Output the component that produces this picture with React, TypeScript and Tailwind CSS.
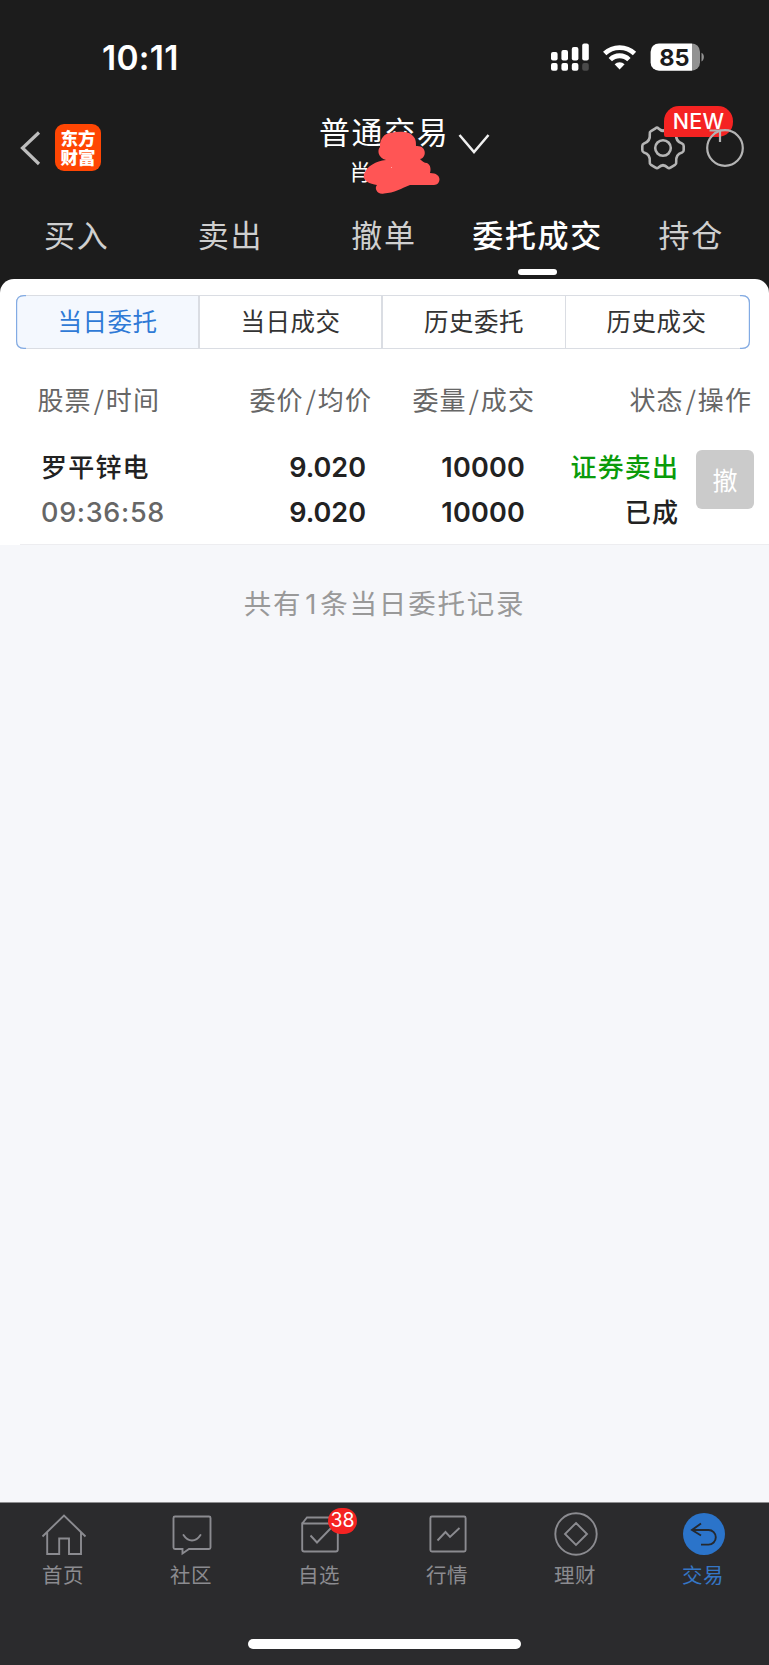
import React from "react";

const cjk = "font-['Noto_Sans_CJK_SC',sans-serif]";
const num = "font-['Inter','Noto_Sans_CJK_SC',sans-serif]";

function StatusBar() {
  return (
    <div className="flex h-[115px] shrink-0 items-start pl-[102px] pr-[65px]">
      <div className={`${num} mt-[38px] text-[33.5px] leading-[40px] font-semibold tracking-[0.3px] text-white`}>10:11</div>
      <svg className="mt-[43px] ml-auto" width="154" height="28" viewBox="550 43 154 28">
        <g fill="#fff">
          <rect x="551" y="52" width="6.6" height="8.4" rx="2" />
          <rect x="561.4" y="50" width="6.6" height="10.4" rx="2" />
          <rect x="571.8" y="47" width="6.6" height="13.4" rx="2" />
          <rect x="582.2" y="43.6" width="6.6" height="16.8" rx="2" />
          <rect x="551" y="63" width="6.6" height="7.8" rx="2" />
          <rect x="561.4" y="63" width="6.6" height="7.8" rx="2" />
          <rect x="571.8" y="63" width="6.6" height="7.8" rx="2" />
          <rect x="582.2" y="63" width="6.6" height="7.8" rx="2" fill="#4a4a4a" />
        </g>
        <g fill="none" stroke="#fff" strokeWidth="4.8">
          <path d="M604.7 53.6a21.6 21.6 0 0 1 29.8 0" />
          <path d="M610.3 59.6a13.2 13.2 0 0 1 18.6 0" />
        </g>
        <path d="M619.6 69.4l-5-5.2a7.4 7.4 0 0 1 10 0z" fill="#fff" />
        <clipPath id="battery">
          <rect x="650.6" y="43.4" width="49.4" height="27.4" rx="8.4" />
        </clipPath>
        <g clipPath="url(#battery)">
          <rect x="650" y="43" width="42" height="28" fill="#fff" />
          <rect x="692" y="43" width="8" height="28" fill="#929292" />
        </g>
        <path d="M701.5 52.8c3.2 1.2 3.2 7.2 0 8.6z" fill="#929292" />
        <text x="674.500" y="65.500" textAnchor="middle" fontFamily="Inter" fontWeight="700" fontSize="23.500" fill="#1c1c1c">85</text>
      </svg>
    </div>
  );
}

function Header() {
  return (
    <div className="relative flex h-[85px] shrink-0 items-start">
      <svg className="mt-[15px] ml-[20px]" width="22" height="36" viewBox="20 130 22 36">
        <path d="M39 132.500L22.500 148l16.500 16" fill="none" stroke="#bdbdbd" strokeWidth="3.200" />
      </svg>
      <div className="mt-[9px] ml-[13px] flex h-[47px] w-[46px] flex-col items-center justify-center rounded-[9px] bg-[#ff4603] font-['Noto_Sans_CJK_SC',sans-serif] text-[17.500px] leading-[19px] font-black text-white">
        <span>东方</span>
        <span className="mb-[2px]">财富</span>
      </div>
      <div className="mt-[-6px] ml-[218px] flex w-[130px] flex-col">
        <span className={`${cjk} text-[31px] leading-[43px] tracking-[1.600px] whitespace-nowrap text-white`}>普通交易</span>
        <span className={`${cjk} mt-[2px] ml-[30px] h-[32px] text-[22px] leading-[32px] text-white`}>肖</span>
      </div>
      <svg className="mt-[17px] ml-[8px]" width="34" height="24" viewBox="457 132 34 24">
        <path d="M459.500 135L474 152l14.500-17" fill="none" stroke="#f0f0f0" strokeWidth="2.500" />
      </svg>
      <svg className="mt-[10px] ml-[149px]" width="46" height="46" viewBox="-23 -23 46 46">
        <path
          d="M-7.500-19.600Q-6-21-4.500-19.500Q0-15 4.500-19.500Q6-21 7.500-19.600L12-17Q13.600-16 13.200-14Q12.500-6.500 19-4.600Q20.700-4 20.700-2V2Q20.700 4 19 4.600Q12.500 6.500 13.200 14Q13.600 16 12 17L7.500 19.600Q6 20.800 4.500 19.500Q0 15-4.500 19.500Q-6 20.800-7.500 19.600L-12 17Q-13.600 16-13.200 14Q-12.500 6.500-19 4.600Q-20.700 4-20.700 2V-2Q-20.700-4-19-4.600Q-12.500-6.500-13.200-14Q-13.600-16-12-17Z"
          fill="none"
          stroke="#b4b4b4"
          strokeWidth="2.600"
        />
        <circle r="7.800" fill="none" stroke="#b4b4b4" strokeWidth="2.600" />
      </svg>
      <div className={`${num} absolute top-[-9px] left-[664px] flex h-[31px] w-[69px] items-center justify-center rounded-[15px] rounded-bl-[2px] bg-[#f52322] text-[21.500px] leading-none font-medium tracking-[0.300px] text-white`}>NEW</div>
      <svg className="relative mt-[12px] ml-[18px]" width="42" height="42" viewBox="704 127 42 42">
        <circle cx="725" cy="148" r="17.800" fill="none" stroke="#b4b4b4" strokeWidth="2.200" />
        <path d="M709.500 130.500H720V142" fill="none" stroke="#b4b4b4" strokeWidth="2.200" />
      </svg>
      <svg className="absolute top-[15px] left-[360px]" width="84" height="66" viewBox="360 130 84 66">
        <path
          d="M380 144C381 138 384 134 390 133C399 131 409 131 413 136C416 139 416 142 416 146C427 145 427 158 420 159C422 161 424 163 427 163C431 165 431 170 430 173C443 173 441 185 434 185H410C402 188 394 193 384 193.500C377 195 374 188 377 185C370 184 362 181 364 174C367 166 376 161 386 160C378 158 377 150 380 147Z"
          fill="#ff5555"
        />
        <circle cx="391.500" cy="167.500" r="0.500" fill="#ffc4c4" />
      </svg>
    </div>
  );
}

const tabs = ["买入", "卖出", "撤单", "委托成交", "持仓"];

function Tabs() {
  return (
    <div className="grid h-[79px] w-[768px] shrink-0 grid-cols-5">
      {tabs.map((t) => {
        const active = t === "委托成交";
        return (
          <div key={t} className={`${cjk} flex flex-col items-center text-[31px] leading-[44px] tracking-[1.700px] ${active ? "font-medium text-white" : "text-[#cfcfcf]"}`}>
            <span className="mt-[12px] whitespace-nowrap">{t}</span>
            {active && <i className="mt-[13px] h-[6px] w-[39px] rounded-[3px] bg-white" />}
          </div>
        );
      })}
    </div>
  );
}

function Segments() {
  return (
    <div className="relative mt-[15px] ml-[16px] h-[54px] w-[734px]">
      <div className={`${cjk} grid h-full grid-cols-4 overflow-hidden rounded-[7px] border-[1.500px] border-[#dadde3] text-[24.500px] leading-[34px] tracking-[0.500px] text-[#333]`}>
        <div className="flex items-center justify-center border-r-2 border-[#dadde3] bg-[#f4f8fe] pb-[2px] text-[#2f7ad6]">当日委托</div>
        <div className="flex items-center justify-center border-r-2 border-[#dadde3] pb-[2px]">当日成交</div>
        <div className="flex items-center justify-center border-r border-[#dadde3] pb-[2px]">历史委托</div>
        <div className="flex items-center justify-center pr-[2px] pb-[2px]">历史成交</div>
      </div>
      <svg className="absolute inset-0" width="734" height="54" fill="none" stroke="#82abe4" strokeWidth="1.200">
        <path d="M10 .6H8Q.6 .6 .6 8V46Q.6 53.400 8 53.400H10M724 .6H726Q733.400 .6 733.400 8V46Q733.400 53.400 726 53.400H724" />
      </svg>
    </div>
  );
}

function HeadCell({ a, b, className }: { a: string; b: string; className: string }) {
  return (
    <div className={`flex justify-end whitespace-nowrap ${className}`}>
      <span className="tracking-[1.200px]">{a}</span>
      <span className="w-[14px] text-center">/</span>
      <span>
        <span className="tracking-[1.200px]">{b[0]}</span>
        {b[1]}
      </span>
    </div>
  );
}

function Orders() {
  return (
    <div className="shrink-0 rounded-t-[14px] bg-white pt-px">
      <div className="flow-root h-[264px]">
        <Segments />
        <div className={`${cjk} mt-[31px] flex h-[38px] text-[26px] leading-[38px] text-[#666]`}>
          <HeadCell a="股票" b="时间" className="w-[159px]" />
          <HeadCell a="委价" b="均价" className="w-[212px]" />
          <HeadCell a="委量" b="成交" className="w-[163px]" />
          <HeadCell a="状态" b="操作" className="w-[217px]" />
        </div>
        <div className="mt-[27px] flex">
          <div className={`${num} grid grid-cols-[128px_197px_159px_154px] pl-[41px] text-[27px] leading-[45px] font-semibold whitespace-nowrap text-[#222]`}>
            <div className={`${cjk} -mt-[2px] text-[26px] font-medium tracking-[1.200px]`}>罗平锌电</div>
            <div className="text-right">9.020</div>
            <div className="text-right tracking-[0.200px]">10000</div>
            <div className={`${cjk} -mt-[2px] text-right text-[26px] font-medium tracking-[1.100px] text-[#0a9b0a]`}>证券卖出</div>
            <div className="font-medium tracking-[0.700px] text-[#666]">09:36:58</div>
            <div className="text-right">9.020</div>
            <div className="text-right tracking-[0.200px]">10000</div>
            <div className={`${cjk} -mt-[2px] text-right text-[26px] font-medium tracking-[1.100px]`}>已成</div>
          </div>
          <div className={`${cjk} mt-[5px] ml-[17px] flex h-[59px] w-[58px] items-center justify-center rounded-[6px] bg-[#cbcbcb] pb-[2px] text-[25px] leading-[38px] text-white`}>撤</div>
        </div>
      </div>
      <div className="ml-[20px] h-px bg-[#ededf0]" />
    </div>
  );
}

const icons: Record<string, React.ReactNode> = {
  首页: <path d="M-21.500 2.500L0-18.500 21.500 2.500M-16.800-1.500V20H-4.800V4.500H5V20H17V-1.500" />,
  社区: (
    <>
      <path d="M-17-17.500H17Q18.500-17.500 18.500-16V13.500Q18.500 15 17 15H-3L-9.500 19.500V15H-17Q-18.500 15-18.500 13.500V-16Q-18.500-17.500-17-17.500Z" />
      <path d="M-8.500 1Q-5 6.500 0 6.500T8.500 1" strokeLinecap="round" />
    </>
  ),
  自选: (
    <>
      <path d="M-17.800-10.500V15.500Q-17.800 17.500-15.800 17.500H15.800Q17.800 17.500 17.800 15.500V-10.500ZM-17.800-10.500L-13-16.500H13L17.800-10.500" />
      <path d="M-9.500 1.500L-3 8.500 11-6" />
    </>
  ),
  行情: (
    <>
      <rect x="-17.600" y="-17.500" width="35.200" height="35" rx="1.500" />
      <path d="M-10.500 6.500L-2.500-2 2 3 11.500-6" />
    </>
  ),
  理财: (
    <>
      <circle r="20.700" />
      <path d="M0-11L11 0 0 11-11 0Z" />
    </>
  ),
  交易: (
    <>
      <circle r="21" fill="#2b74ca" stroke="none" />
      <path d="M-3-10.500L-12-4-3 1.500M-11.500-4H4.500A7.300 7.300 0 0 1 4.500 10.600H-3" stroke="#25292f" />
    </>
  ),
};

function BottomBar() {
  return (
    <div className="shrink-0 border-t border-[#8e8e90] bg-[#2b2b2d]">
      <div className="grid h-[136px] w-[768px] grid-cols-6">
        {Object.keys(icons).map((name) => (
          <div key={name} className={`${cjk} relative flex flex-col items-center text-[20.500px] leading-[30px] tracking-[0.600px] ${name === "交易" ? "text-[#3576c5]" : "text-[#8b8b90]"}`}>
            <svg className="mt-[8px]" width="46" height="46" viewBox="-23 -23 46 46" fill="none" stroke="#8b8b90" strokeWidth="1.900">
              {icons[name]}
            </svg>
            <span className="mt-[2px] mr-[2px]">{name}</span>
            {name === "自选" && (
              <span className={`${num} absolute top-[5px] left-[72px] flex h-[26px] w-[29px] items-center justify-center rounded-full bg-[#f52322] text-[19.500px] leading-none tracking-normal text-white`}>38</span>
            )}
          </div>
        ))}
      </div>
      <div className="ml-[248px] mb-[16px] h-[10px] w-[273px] rounded-full bg-white" />
    </div>
  );
}

export default function App() {
  return (
    <div className="flex h-[1665px] w-[769px] flex-col overflow-hidden bg-[#f6f7fa]">
      <div className="relative flex shrink-0 flex-col bg-[#1c1c1c]">
        <StatusBar />
        <Header />
        <Tabs />
        <Orders />
      </div>
      <div className={`${cjk} flex flex-1 justify-center pt-[37px] text-[27.500px] leading-[40px] tracking-[1.800px] text-[#999]`}>
        <div>
          共有<span className={`${num} ml-[3px] mr-[2px]`}>1</span>条当日委托记录
        </div>
      </div>
      <BottomBar />
    </div>
  );
}
